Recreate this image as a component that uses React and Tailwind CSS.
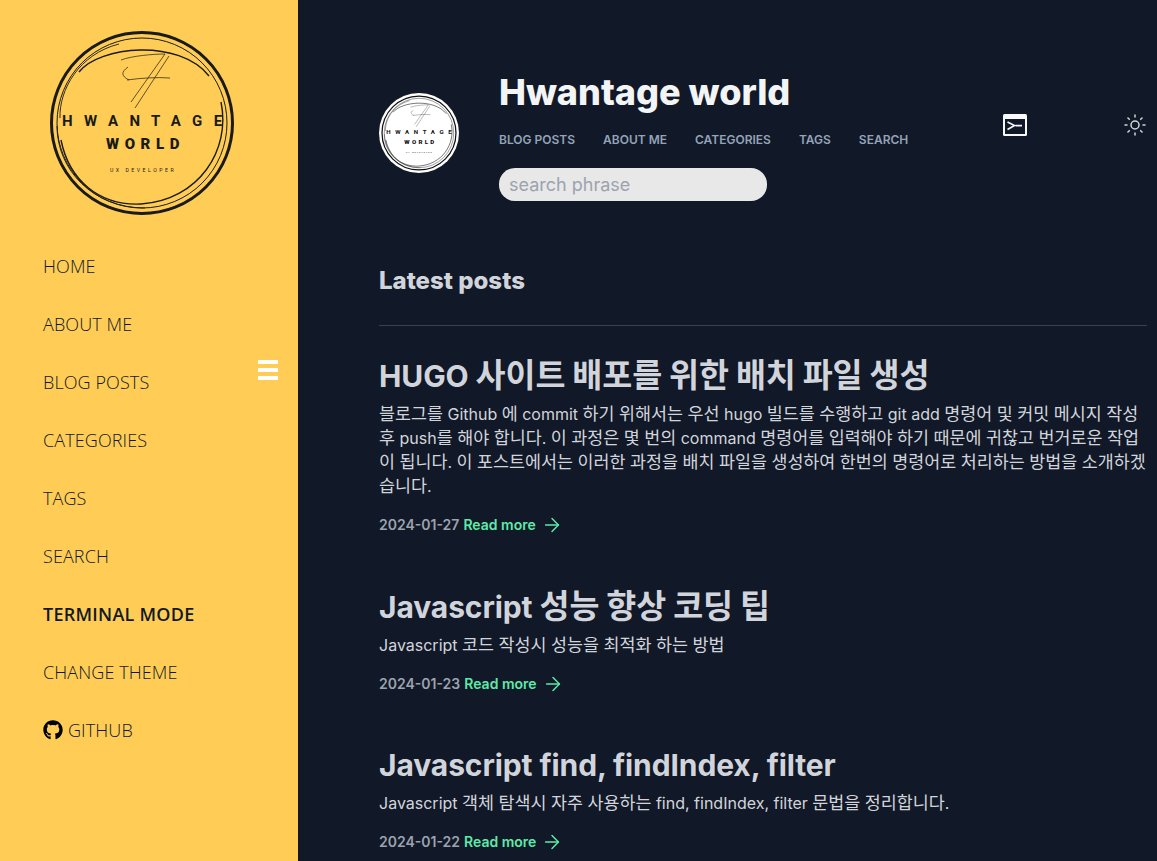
import { ArrowRight, Sun } from 'lucide-react';
import { FaGithub } from 'react-icons/fa';

const sideLinks = ['HOME', 'ABOUT ME', 'BLOG POSTS', 'CATEGORIES', 'TAGS', 'SEARCH', 'TERMINAL MODE', 'CHANGE THEME'];
const topLinks = ['BLOG POSTS', 'ABOUT ME', 'CATEGORIES', 'TAGS', 'SEARCH'];

const posts = [
  {
    title: 'HUGO 사이트 배포를 위한 배치 파일 생성',
    body: '블로그를 Github 에 commit 하기 위해서는 우선 hugo 빌드를 수행하고 git add 명령어 및 커밋 메시지 작성 후 push를 해야 합니다. 이 과정은 몇 번의 command 명령어를 입력해야 하기 때문에 귀찮고 번거로운 작업이 됩니다. 이 포스트에서는 이러한 과정을 배치 파일을 생성하여 한번의 명령어로 처리하는 방법을 소개하겠습니다.',
    date: '2024-01-27',
  },
  {
    title: 'Javascript 성능 향상 코딩 팁',
    body: 'Javascript 코드 작성시 성능을 최적화 하는 방법',
    date: '2024-01-23',
  },
  {
    title: 'Javascript find, findIndex, filter',
    body: 'Javascript 객체 탐색시 자주 사용하는 find, findIndex, filter 문법을 정리합니다.',
    date: '2024-01-22',
  },
];

// hangul in the reference runs a full em wide, Noto CJK only 0.92em
function Hangul({ text }) {
  return text.split(/([가-힣]+)/).map((part, i) =>
    i % 2 ? (
      <span key={i} className="text-[1.087em]">
        {part}
      </span>
    ) : (
      part
    ),
  );
}

function Logo({ color, className }) {
  return (
    <svg viewBox="0 0 186 186" className={className} fill="none">
      <circle cx="93" cy="93" r="90.5" stroke={color} strokeWidth="3" />
      <circle cx="93" cy="93" r="85" stroke={color} strokeWidth="1" />
      <path d="M30 42C50 16 130 8 160 46M172 72C182 120 150 170 92 174C50 176 20 150 12 110" stroke={color} strokeWidth="1.4" />
      <path d="M11 88C10 60 30 24 70 14M8 96C8 140 44 178 96 178" stroke={color} strokeWidth="0.9" />
      <path d="M72 30C82 26 104 24 116 24L82 72M79 37C72 42 72 46 80 50M78 50C92 48 108 47 121 48M120 26L86 78" stroke={color} strokeWidth="0.7" />
      <text x="13" y="96" fill={color} fontFamily="Roboto, sans-serif" fontWeight="700" fontSize="15" letterSpacing="11.3">HWANTAGE</text>
      <text x="57" y="119" fill={color} fontFamily="Roboto, sans-serif" fontWeight="900" fontSize="15" letterSpacing="5.6">WORLD</text>
      <text x="61" y="142" fill={color} fontFamily="Roboto, sans-serif" fontWeight="400" fontSize="5.2" letterSpacing="2.5">UX DEVELOPER</text>
    </svg>
  );
}

function TerminalIcon() {
  return (
    <svg viewBox="0 0 24 22" className="h-[22px] w-6">
      <rect x="0" y="0" width="24" height="22" rx="1.5" fill="#f8fafc" />
      <rect x="2" y="5" width="20" height="15" fill="#111827" />
      <path d="M4.5 8L11.5 11.5L4.5 15.5M12.5 11.6H19" fill="none" stroke="#f8fafc" strokeWidth="1.6" />
    </svg>
  );
}

export default function App() {
  return (
    <div className="flex h-screen overflow-hidden bg-[#111827] font-['Inter',sans-serif]">
      <aside className="relative w-[298px] shrink-0 bg-[#ffcd55] font-['Open_Sans',sans-serif]">
        <Logo color="#1a1a1a" className="mt-[30px] ml-[49px] h-[186px] w-[186px]" />
        <nav className="mt-[21px] flex flex-col pl-[43px] text-[18px] font-light tracking-[0.1px] text-[#111827]">
          {sideLinks.map((l) => (
            <a key={l} className={`flex h-[58px] items-center ${l === 'TERMINAL MODE' ? 'font-semibold tracking-[0.25px]' : ''}`}>
              {l}
            </a>
          ))}
          <a className="flex h-[58px] items-center gap-[5px]">
            <FaGithub className="h-5 w-5 text-black" />
            GITHUB
          </a>
        </nav>
        <div className="absolute top-[360px] left-[258px] flex w-5 flex-col gap-1">
          <span className="h-1 bg-white" />
          <span className="h-1 bg-white" />
          <span className="h-1 bg-white" />
        </div>
      </aside>

      <main className="min-w-0 flex-1 pr-[10px] pl-[81px]">
        <header className="flex items-start pt-[68px]">
          <div className="mt-[25px] flex h-20 w-20 shrink-0 items-center justify-center rounded-full bg-white">
            <Logo color="#111" className="h-[76px] w-[76px]" />
          </div>
          <div className="ml-10 w-[464px] shrink-0">
            <h1 className="text-[36px] leading-[48px] font-extrabold text-[#f3f4f6]">Hwantage world</h1>
            <div className="mt-[16px] flex gap-7 text-xs leading-4 font-semibold text-[#94a3b8]">
              {topLinks.map((l) => (
                <a key={l}>{l}</a>
              ))}
            </div>
            <input
              placeholder="search phrase"
              className="mt-[20px] h-[33px] w-[268px] rounded-[16px] bg-[#e8e8e8] px-[10px] text-[18px] outline-none placeholder:text-[#9ca3af]"
            />
          </div>
          <div className="mt-[46px] ml-10 w-[120px] shrink-0">
            <TerminalIcon />
          </div>
          <Sun className="mt-[45px] h-6 w-6 shrink-0 text-[#d1d5db]" strokeWidth={1.5} />
        </header>

        <h2 className="mt-[64px] text-2xl leading-8 font-extrabold text-[#d1d5db]">Latest posts</h2>
        <hr className="mt-[28px] border-[#374151]" />

        <div className="mt-[31px] flex flex-col gap-[52px] font-['Inter','Noto_Sans_CJK_KR',sans-serif]">
          {posts.map((p) => (
            <article key={p.date}>
              <h3 className="text-[30px] leading-9 font-bold tracking-[-0.1px] text-[#d1d5db]">
                <Hangul text={p.title} />
              </h3>
              <p className="mt-2 text-base leading-6 text-[#d1d5db]">
                <Hangul text={p.body} />
              </p>
              <div className="mt-4 flex items-center text-sm leading-5 font-semibold">
                <span className="text-[#9ca3af]">{p.date}</span>
                <a className="ml-1 flex items-center gap-[5px] text-[#5eeaa8]">
                  Read more
                  <ArrowRight className="h-[22px] w-[22px]" strokeWidth={1.6} />
                </a>
              </div>
            </article>
          ))}
        </div>
      </main>
    </div>
  );
}
